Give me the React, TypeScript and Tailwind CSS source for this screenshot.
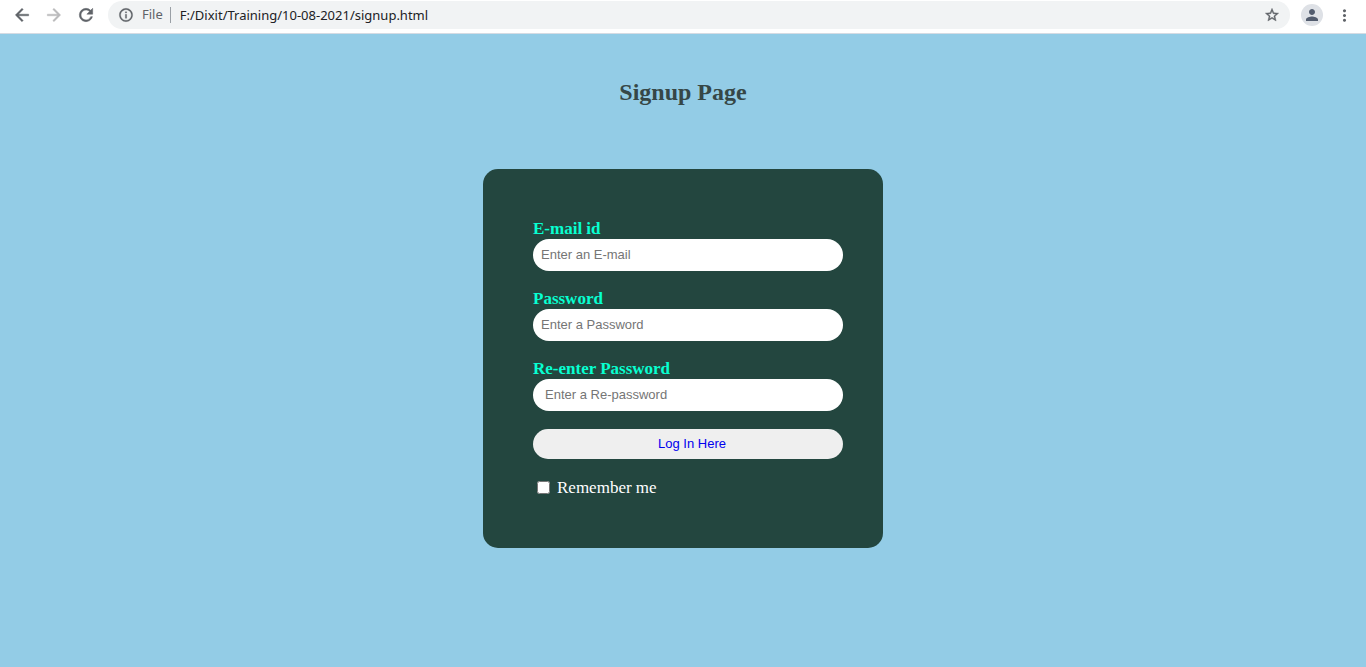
import React from "react";

const ICONS = {
  back: "M20 11H7.83l5.59-5.59L12 4l-8 8 8 8 1.41-1.41L7.83 13H20v-2z",
  forward: "M12 4l-1.41 1.41L16.17 11H4v2h12.17l-5.58 5.59L12 20l8-8z",
  reload:
    "M17.65 6.35A7.958 7.958 0 0 0 12 4a8 8 0 1 0 7.73 10h-2.08A5.99 5.99 0 0 1 12 18a6 6 0 1 1 0-12c1.66 0 3.14.69 4.22 1.78L13 11h7V4l-2.35 2.35z",
  info: "M11 7h2v2h-2zm0 4h2v6h-2zm1-9C6.48 2 2 6.48 2 12s4.48 10 10 10 10-4.48 10-10S17.52 2 12 2zm0 18c-4.41 0-8-3.59-8-8s3.59-8 8-8 8 3.59 8 8-3.59 8-8 8z",
  star: "M22 9.24l-7.19-.62L12 2 9.19 8.63 2 9.24l5.46 4.73L5.82 21 12 17.27 18.18 21l-1.63-7.03L22 9.24zM12 15.4l-3.76 2.27 1-4.28-3.32-2.88 4.38-.38L12 6.1l1.71 4.04 4.38.38-3.32 2.88 1 4.28L12 15.4z",
  person: "M12 12c2.21 0 4-1.79 4-4s-1.79-4-4-4-4 1.79-4 4 1.79 4 4 4zm0 2c-2.67 0-8 1.34-8 4v2h16v-2c0-2.66-5.33-4-8-4z",
  menu: "M12 8c1.1 0 2-.9 2-2s-.9-2-2-2-2 .9-2 2 .9 2 2 2zm0 2c-1.1 0-2 .9-2 2s.9 2 2 2 2-.9 2-2-.9-2-2-2zm0 6c-1.1 0-2 .9-2 2s.9 2 2 2 2-.9 2-2-.9-2-2-2z",
};

function Icon({ name, size, weight = 0 }: { name: keyof typeof ICONS; size: number; weight?: number }) {
  return (
    <svg
      width={size}
      height={size}
      viewBox="0 0 24 24"
      fill="currentColor"
      stroke="currentColor"
      strokeWidth={weight}
      aria-hidden="true"
    >
      <path d={ICONS[name]} />
    </svg>
  );
}

function BrowserBar() {
  return (
    <header className="flex h-[34px] items-start border-b border-[#d5dbe3] bg-white pr-3 pl-3 font-['Noto_Sans','Open_Sans',sans-serif] text-[13px] text-[#5f6368]">
      <nav className="flex h-[30px] items-center gap-3" aria-label="History">
        <button type="button" aria-label="Back">
          <Icon name="back" size={20} weight={0.5} />
        </button>
        <button type="button" aria-label="Forward" className="text-[#bababc]">
          <Icon name="forward" size={20} weight={0.5} />
        </button>
        <button type="button" aria-label="Reload">
          <Icon name="reload" size={20} weight={0.6} />
        </button>
      </nav>
      <div className="mt-px ml-3 flex h-7 flex-1 items-center rounded-full bg-[#f1f3f4] pr-2.5 pl-2.5">
        <Icon name="info" size={16} weight={0.4} />
        <span className="ml-2">File</span>
        <span className="mr-[9px] ml-[7px] h-4 w-px bg-[#9aa0a6]" />
        <span className="flex-1 pt-px text-[#202124]">F:/Dixit/Training/10-08-2021/signup.html</span>
        <button type="button" aria-label="Bookmark this page">
          <Icon name="star" size={16} weight={0.6} />
        </button>
      </div>
      <div className="ml-[11px] flex h-[30px] items-center gap-3">
        <button
          type="button"
          aria-label="Profile"
          className="flex h-[22px] w-[22px] items-center justify-center rounded-full bg-[#dee1e6] text-[#525c6e]"
        >
          <Icon name="person" size={18} />
        </button>
        <button type="button" aria-label="Menu">
          <Icon name="menu" size={19} />
        </button>
      </div>
    </header>
  );
}

type FieldProps = {
  id: string;
  label: string;
  type: string;
  placeholder: string;
  inset: string;
};

function Field({ id, label, type, placeholder, inset }: FieldProps) {
  return (
    <div className="flex flex-col">
      <label htmlFor={id} className="text-[17px] leading-5 font-bold text-[#08ffd1]">
        {label}
      </label>
      <input
        id={id}
        type={type}
        placeholder={placeholder}
        className={`h-8 w-full rounded-full bg-white pr-2 pb-0.5 font-['Liberation_Sans',sans-serif] text-[13px] text-black outline-none placeholder:text-[#757575] ${inset}`}
      />
    </div>
  );
}

export default function App() {
  return (
    <div className="flex min-h-screen flex-col bg-[#93cce6] font-['Liberation_Serif',serif]">
      <BrowserBar />
      <main className="flex flex-col items-center pt-11 pb-12">
        <h2 className="text-2xl leading-7 font-bold text-[#364747]">Signup Page</h2>
        <form
          className="mt-[63px] flex w-full max-w-[400px] flex-col gap-[18px] rounded-[15px] bg-[#23463f] py-[50px] pr-10 pl-[50px]"
          onSubmit={(event) => event.preventDefault()}
        >
          <Field id="email" label="E-mail id" type="email" placeholder="Enter an E-mail" inset="pl-2" />
          <Field id="password" label="Password" type="password" placeholder="Enter a Password" inset="pl-2" />
          <Field
            id="confirm"
            label="Re-enter Password"
            type="password"
            placeholder="Enter a Re-password"
            inset="pl-3"
          />
          <button
            type="submit"
            className="h-[30px] w-full rounded-full bg-[#efefef] pl-2 text-center font-['Liberation_Sans',sans-serif] text-[13px] text-[#0000ee]"
          >
            Log In Here
          </button>
          <div className="flex h-[21px] items-center gap-[7px] pl-1">
            <input id="remember" type="checkbox" className="h-[13px] w-[13px]" />
            <label htmlFor="remember" className="text-[17px] leading-5 text-white">
              Remember me
            </label>
          </div>
        </form>
      </main>
    </div>
  );
}
